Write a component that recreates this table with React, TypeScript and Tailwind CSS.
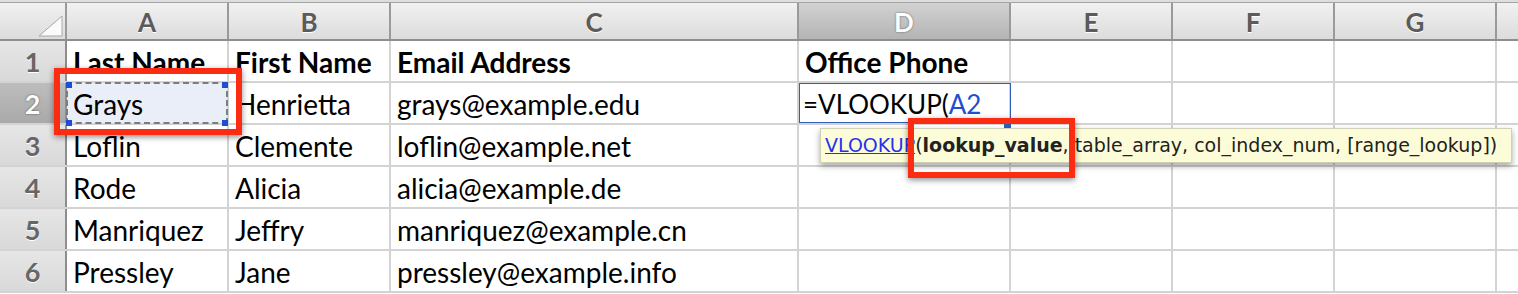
import React from "react";

const cols = ["A", "B", "C", "D", "E", "F", "G", ""];
const widths = ["w-[162px]", "w-[162px]", "w-[408px]", "w-[212px]", "w-[162px]", "w-[162px]", "w-[162px]", "flex-1"];

const rows: string[][] = [
  ["Last Name", "First Name", "Email Address", "Office Phone"],
  ["Grays", "Henrietta", "grays@example.edu", ""],
  ["Loflin", "Clemente", "loflin@example.net", ""],
  ["Rode", "Alicia", "alicia@example.de", ""],
  ["Manriquez", "Jeffry", "manriquez@example.cn", ""],
  ["Pressley", "Jane", "pressley@example.info", ""],
];

const cellFont = "font-['Lato','Liberation_Sans',sans-serif] text-[28px] leading-none text-black";

function Handle({ pos }: { pos: string }) {
  return <span className={`absolute h-[6px] w-[6px] bg-[#1d4fd1] ${pos}`} />;
}

function ColumnHeader() {
  return (
    <div className="flex h-[38px] border-b-2 border-[#8e8e8e] bg-gradient-to-b from-[#f1f1f1] to-[#dcdcdc]">
      <div className="flex w-[67px] shrink-0 items-end justify-end border-r-2 border-[#9a9a9a] pb-[2px] pr-[2px]">
        <svg width="25" height="22" viewBox="0 0 25 22">
          <path d="M24 1 L24 21 L1 21 Z" fill="#fbfbfb" stroke="#a8a8a8" strokeWidth="1" />
        </svg>
      </div>
      {cols.map((c, i) => (
        <div
          key={i}
          className={`${widths[i]} ${i === 7 ? "" : "shrink-0 border-r-2 border-[#9a9a9a]"} ${
            c === "D"
              ? "bg-gradient-to-b from-[#d2d2d2] to-[#b4b4b4] text-white [text-shadow:0_0_2px_#555]"
              : "text-[#5b5b5b] [text-shadow:0_1px_0_#fff]"
          } flex items-center justify-center pt-[2px] font-['Lato','Liberation_Sans',sans-serif] text-[26px] font-bold`}
        >
          {c}
        </div>
      ))}
    </div>
  );
}

function Tooltip() {
  return (
    <div className="absolute left-[21px] top-[45px] z-10 flex h-[35px] w-[692px] items-center whitespace-nowrap border border-[#d0d0b8] bg-[#fdfcd8] pl-[4px] font-['DejaVu_Sans','Liberation_Sans',sans-serif] text-[19px] leading-none text-[#222] shadow-[0_3px_6px_rgba(0,0,0,0.35)]">
      <span className="text-[#2233ee] underline">VLOOKUP</span>(<span className="font-bold">lookup_value</span>, table_array,
      col_index_num, [range_lookup])
    </div>
  );
}

function Row({ n, cells }: { n: number; cells: string[] }) {
  const selected = n === 2;
  return (
    <div className="flex h-[42px] border-b-2 border-[#d3d3d3]">
      <div
        className={`flex w-[67px] shrink-0 items-center justify-center border-r-2 border-[#8e8e8e] pt-[2px] font-['Lato','Liberation_Sans',sans-serif] text-[27px] font-bold ${
          selected
            ? "bg-gradient-to-b from-[#bdbdbd] to-[#a9a9a9] text-white [text-shadow:0_0_2px_#444]"
            : "bg-gradient-to-b from-[#e6e6e6] to-[#d9d9d9] text-[#666] [text-shadow:0_1px_0_#fff]"
        }`}
      >
        {n}
      </div>
      {cols.map((_, i) => {
        const text = cells[i] ?? "";
        const isA2 = selected && i === 0;
        const isD2 = selected && i === 3;
        if (isD2) {
          // cell in edit mode, with the function tooltip under it
          return (
            <div
              key={i}
              className={`relative ${widths[i]} flex shrink-0 items-end whitespace-nowrap border-r-2 border-[#d3d3d3] bg-white pb-[6px] pl-[4px] font-['Lato','Liberation_Sans',sans-serif] text-[26px] leading-none text-black outline-[1.5px] -outline-offset-[1px] outline-[#2f5fb6]`}
            >
              =VLOOKUP(<span className="text-[#1f4fd0]">A2</span>
              <span className="absolute -bottom-[5px] -right-[2px] h-[6px] w-[7px] bg-[#2a5fb8]" />
              <Tooltip />
            </div>
          );
        }
        return (
          <div
            key={i}
            className={`${widths[i]} ${i === 7 ? "" : "shrink-0 border-r-2 border-[#d3d3d3]"} ${
              isA2 ? "relative bg-[#eaeef9]" : "bg-white"
            } flex items-end whitespace-nowrap pb-[5px] pl-[6px] ${cellFont} ${n === 1 ? "font-bold" : ""}`}
          >
            {text}
            {isA2 && (
              <>
                <span className="absolute -bottom-[1px] -left-[1px] -right-[1px] -top-[1px] border-2 border-dashed border-[#7c7c7c]" />
                <Handle pos="-left-[1px] -top-[1px]" />
                <Handle pos="-right-[1px] -top-[1px]" />
                <Handle pos="-left-[1px] -bottom-[3px]" />
                <Handle pos="-right-[1px] -bottom-[3px]" />
              </>
            )}
          </div>
        );
      })}
    </div>
  );
}

export default function App() {
  return (
    <div className="relative h-[294px] w-[1518px] overflow-hidden bg-white">
      <div className="h-[2px] bg-[#dedede]" />
      <div className="h-[1px] bg-[#a4a4a4]" />
      <ColumnHeader />
      {rows.map((r, i) => (
        <Row key={i} n={i + 1} cells={r} />
      ))}

      {/* red callouts */}
      <div className="absolute left-[54px] top-[68px] z-20 h-[67px] w-[188px] border-[6px] border-[#fb2c12] shadow-[0_2px_6px_rgba(0,0,0,0.45)]" />
      <div className="absolute left-[908px] top-[118px] z-20 h-[60px] w-[167px] border-[6px] border-[#fb2c12] shadow-[0_2px_6px_rgba(0,0,0,0.45)]" />
    </div>
  );
}
